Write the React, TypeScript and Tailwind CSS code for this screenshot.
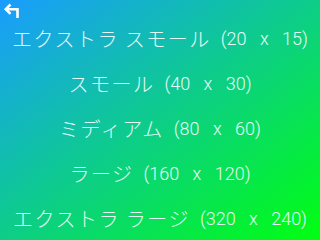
import React from "react";

const items: [string, string][] = [
  ["エクストラ スモール", "(20 x 15)"],
  ["スモール", "(40 x 30)"],
  ["ミディアム", "(80 x 60)"],
  ["ラージ", "(160 x 120)"],
  ["エクストラ ラージ", "(320 x 240)"],
];

export default function App() {
  return (
    <div className="relative w-[320px] h-[240px] overflow-hidden bg-[linear-gradient(to_bottom_right,#1a9cff,#00ff10)]">
      <svg
        className="absolute left-[3px] top-[1px]"
        width="18"
        height="18"
        viewBox="0 0 18 18"
        fill="none"
        stroke="white"
        strokeWidth="2.6"
        strokeLinecap="butt"
        strokeLinejoin="miter"
      >
        <path d="M7.5 3.5 L2.8 8.2 L7.5 12.9" />
        <path d="M3 8.2 H14.5 V17" />
      </svg>
      <div className="flex flex-col items-center pt-[23px] gap-[13px]">
        {items.map(([jp, dim]) => (
          <div
            key={jp}
            className="h-[32px] flex items-center whitespace-pre leading-none text-[#e4fbf6]"
          >
            <span
              className="text-[20px] font-light tracking-[1.5px]"
              style={{ fontFamily: '"Noto Sans CJK JP", sans-serif' }}
            >
              {jp}
            </span>
            <span
              className="ml-[10px] text-[18px] font-light [word-spacing:9px]"
              style={{ fontFamily: 'Roboto, sans-serif' }}
            >
              {dim}
            </span>
          </div>
        ))}
      </div>
    </div>
  );
}
